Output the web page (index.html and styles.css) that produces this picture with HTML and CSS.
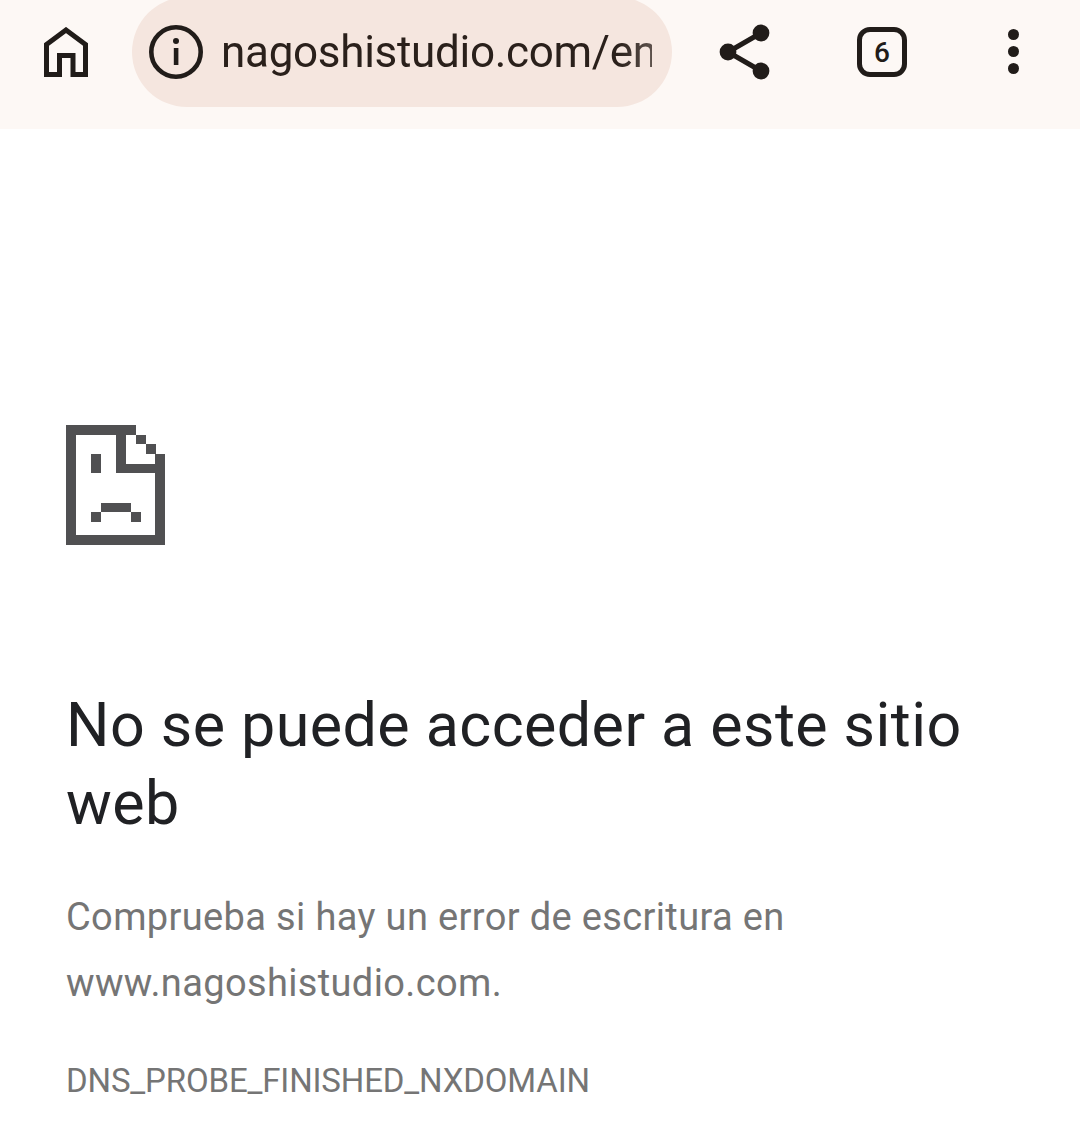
FILE: index.html
```html
<!DOCTYPE html>
<html>
  <head>
    <meta name="viewport" content="width=device-width, initial-scale=1.0">
    <title>nagoshistudio.com</title>
    <link rel="stylesheet" href="styles.css">
  </head>
  <body>
    <div class="toolbar">
      <svg class="home-icon" width="44" height="50" viewBox="44 27 44 50">
        <path d="M59.5 74.5V55.5H73V74.5H85.5V44.5L66 30 46.5 44.5V74.5Z" fill="none" stroke="#211c19" stroke-width="5"/>
      </svg>
      <div class="omnibox">
        <svg class="info-icon" width="54" height="54" viewBox="0 0 54 54">
          <circle cx="27" cy="27" r="24.7" fill="none" stroke="#211c19" stroke-width="4.6"/>
          <circle cx="27" cy="16" r="3" fill="#211c19"/>
          <rect x="24.8" y="23" width="4.6" height="17" fill="#211c19"/>
        </svg>
        <div class="url">nagoshistudio.com/en</div>
      </div>
      <svg class="share-icon" width="52" height="56" viewBox="0 0 52 56">
        <path d="M42 9 9 28 42 47" fill="none" stroke="#211c19" stroke-width="5"/>
        <circle cx="42" cy="9" r="8.4" fill="#211c19"/>
        <circle cx="9" cy="28" r="8.4" fill="#211c19"/>
        <circle cx="42" cy="47" r="8.4" fill="#211c19"/>
      </svg>
      <div class="tab-count">6</div>
      <div class="menu-dots">
        <span></span>
        <span></span>
        <span></span>
      </div>
    </div>

    <div class="error-page">
      <svg class="sad-icon" width="99" height="120" viewBox="0 0 99 120">
        <path fill="#505052" fill-rule="evenodd" d="M0 0H70V10H80V19H90V29H99V120H0ZM10 10V110H89V48H50V10ZM60 10V39H89V29H80V19H70V10Z"/>
        <path fill="#505052" d="M25 29H35V48H25ZM35 78H65V87H35ZM25 87H35V97H25ZM65 87H75V97H65Z"/>
      </svg>
      <h1 class="error-title">No se puede acceder a este sitio web</h1>
      <p class="error-text">Comprueba si hay un error de escritura en www.nagoshistudio.com.</p>
      <div class="error-code">DNS_PROBE_FINISHED_NXDOMAIN</div>
    </div>
  </body>
</html>
```

FILE: styles.css
```css
* {
  box-sizing: border-box;
}
html, body {
  margin: 0;
  background: #fff;
}
body {
  font-family: Roboto, "Liberation Sans", sans-serif;
}

.toolbar {
  display: flex;
  align-items: flex-start;
  height: 129px;
  overflow: hidden;
  background: #fdf8f5;
}
.home-icon {
  flex: none;
  margin: 27px 0 0 44px;
}
.omnibox {
  flex: none;
  display: flex;
  align-items: center;
  width: 540px;
  height: 110px;
  margin: -3px 0 0 44px;
  padding-left: 17px;
  border-radius: 55px;
  background: #f5e6df;
}
.info-icon {
  flex: none;
}
.url {
  width: 431px;
  margin-left: 18px;
  font-size: 44px;
  font-weight: 400;
  letter-spacing: -0.3px;
  color: #2a201b;
  white-space: nowrap;
  overflow: hidden;
  -webkit-mask-image: linear-gradient(to right, #000 92%, rgba(0, 0, 0, 0.75));
  mask-image: linear-gradient(to right, #000 92%, rgba(0, 0, 0, 0.75));
}
.share-icon {
  flex: none;
  margin: 24px 0 0 47px;
}
.tab-count {
  flex: none;
  display: flex;
  align-items: center;
  justify-content: center;
  width: 50px;
  height: 50px;
  margin: 27px 0 0 86px;
  border: 5px solid #211c19;
  border-radius: 13px;
  font-size: 28px;
  font-weight: 500;
  color: #211c19;
}
.menu-dots {
  flex: none;
  display: flex;
  flex-direction: column;
  gap: 6px;
  margin: 29px 0 0 101px;
}
.menu-dots span {
  display: block;
  width: 11px;
  height: 11px;
  border-radius: 50%;
  background: #211c19;
}

.error-page {
  padding: 296px 66px 0 66px;
}
.sad-icon {
  display: block;
  shape-rendering: crispEdges;
}
.error-title {
  margin: 141px 0 0 0;
  font-size: 61px;
  font-weight: 400;
  letter-spacing: 0.43px;
  line-height: 78px;
  color: #202124;
}
.error-text {
  margin: 42px 0 0 0;
  width: 800px;
  font-size: 38px;
  letter-spacing: 0.36px;
  line-height: 66px;
  color: #757575;
}
.error-code {
  margin-top: 43px;
  font-size: 33px;
  letter-spacing: -0.15px;
  line-height: 44px;
  color: #757575;
}
```
